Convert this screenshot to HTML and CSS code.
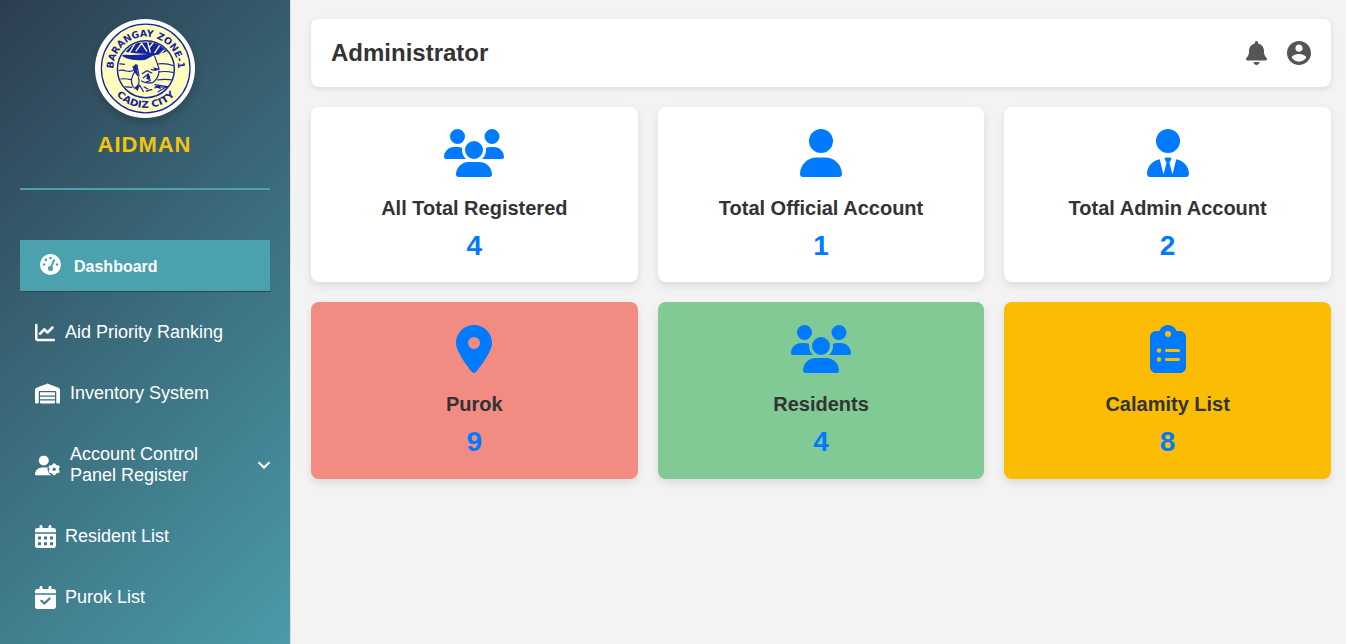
FILE: index.html
```html
<!DOCTYPE html>
<html lang="en">
<head>
<meta charset="utf-8">
<title>AIDMAN</title>
<link rel="stylesheet" href="styles.css">
</head>
<body>
<svg class="defs" width="0" height="0" aria-hidden="true">
  <symbol id="users" viewBox="0 0 640 512"><path d="M144 0a80 80 0 1 1 0 160A80 80 0 1 1 144 0zM512 0a80 80 0 1 1 0 160A80 80 0 1 1 512 0zM0 298.7C0 239.8 47.8 192 106.7 192h42.7c15.9 0 31 3.5 44.6 9.7c-1.3 7.2-1.9 14.7-1.9 22.3c0 38.2 16.8 72.5 43.3 96H21.3C9.6 320 0 310.4 0 298.7zM405.3 320c26.6-23.5 43.3-57.8 43.3-96c0-7.6-.7-15-1.9-22.3c13.6-6.3 28.7-9.7 44.6-9.7h42.7C592.2 192 640 239.8 640 298.7c0 11.8-9.6 21.3-21.3 21.3H405.3zM224 224a96 96 0 1 1 192 0 96 96 0 1 1 -192 0zM128 485.3C128 411.7 187.7 352 261.3 352H378.7C452.3 352 512 411.7 512 485.3c0 14.7-11.9 26.7-26.7 26.7H154.7c-14.7 0-26.7-11.9-26.7-26.7z"/></symbol>
</svg>
<aside class="sidebar">
  <div class="brand">
    <div class="logo">
      <svg viewBox="0 0 100 100" width="100" height="100">
        <defs>
          <path id="arc-top" d="M18.600 53.500A32.300 32.300 0 1 1 82.800 53.500"/>
          <path id="arc-bottom" d="M11.700 54.500A39.300 39.300 0 0 0 89.700 54.500"/>
          <clipPath id="inner"><circle cx="184" cy="178" r="83"/></clipPath>
        </defs>
        <circle cx="50.700" cy="49.500" r="44.300" fill="#fffcbe" stroke="#1525a0" stroke-width="1.300"/>
        <circle cx="50.900" cy="50.200" r="28.500" fill="none" stroke="#1525a0" stroke-width="1.500"/>
        <text class="seal-text"><textPath href="#arc-top" startOffset="50%" text-anchor="middle" textLength="101" lengthAdjust="spacingAndGlyphs">BARANGAY ZONE-1</textPath></text>
        <text class="seal-text"><textPath href="#arc-bottom" startOffset="50%" text-anchor="middle" textLength="66" lengthAdjust="spacingAndGlyphs">CADIZ CITY</textPath></text>
        <g transform="translate(-10 -9) scale(.33333)">
          <g clip-path="url(#inner)" fill="none" stroke="#1525a0" stroke-width="3.500">
            <path fill="#1525a0" stroke="none" d="M144 98L215 96L246 124L220 134L150 130L122 126Z"/>
            <path stroke="#fffcbe" stroke-width="4" d="M152 98L132 130M152 124L170 100L186 124M188 96L196 128M206 96L194 112M224 106L208 130M238 120L224 132"/>
            <path fill="#1525a0" stroke="none" d="M100 132Q140 140 232 127Q204 136 182 149Q150 154 124 145Z"/>
            <path d="M100 161L120 163M218 162Q242 158 268 168M98 182Q112 178 124 183Q138 186 148 180M220 186Q242 182 268 188M100 208Q118 204 138 209M216 210Q240 206 264 210M112 234Q124 228 142 233M208 234Q230 228 252 234"/>
            <path d="M152 163Q154 180 144 194Q132 220 150 236Q168 220 160 202M156 164L162 200M208 136Q216 158 222 176Q206 184 198 178M170 192L186 182L202 190M174 204L190 192L196 212L180 218M222 182Q222 206 202 218Q184 222 168 212M154 240L164 226L176 246M176 230L190 238M182 244L202 238M208 224L246 230L218 246"/>
            <path fill="#1525a0" stroke="none" d="M142 170L154 162L160 202L148 186ZM204 172L226 178L210 182ZM186 196L196 198L192 210L184 206ZM150 230L164 224L158 244ZM208 230L224 224L228 238Z"/>
          </g>
        </g>
      </svg>
    </div>
    <div class="brand-name">AIDMAN</div>
  </div>
  <nav class="menu">
    <a class="item active">
      <svg class="ic20" viewBox="0 0 512 512"><path fill-rule="evenodd" d="M0 256a256 256 0 1 1 512 0A256 256 0 1 1 0 256zM288 96a32 32 0 1 0-64 0 32 32 0 1 0 64 0zM256 416c35.300 0 64-28.700 64-64 0-17.400-6.900-33.100-18.100-44.600L366 161.700c5.300-12.100-.2-26.300-12.300-31.600s-26.300.2-31.600 12.300L257.900 288H256c-35.300 0-64 28.700-64 64s28.700 64 64 64zM176 144a32 32 0 1 0-64 0 32 32 0 1 0 64 0zM96 288a32 32 0 1 0 0-64 32 32 0 1 0 0 64zM448 256a32 32 0 1 0-64 0 32 32 0 1 0 64 0z"/></svg>
      <span>Dashboard</span>
    </a>
    <a class="item">
      <svg class="ic20" viewBox="0 0 512 512"><path d="M64 64c0-17.700-14.300-32-32-32S0 46.300 0 64V400c0 44.200 35.800 80 80 80H480c17.700 0 32-14.300 32-32s-14.300-32-32-32H80c-8.800 0-16-7.200-16-16V64zm406.600 86.600c12.500-12.500 12.500-32.800 0-45.300s-32.800-12.500-45.300 0L320 210.700l-57.400-57.400c-12.500-12.500-32.800-12.500-45.300 0l-112 112c-12.500 12.500-12.500 32.800 0 45.300s32.800 12.500 45.300 0L240 221.300l57.400 57.400c12.500 12.500 32.800 12.500 45.300 0l128-128z"/></svg>
      <span>Aid Priority Ranking</span>
    </a>
    <a class="item">
      <svg class="ic25" viewBox="0 0 640 512"><path d="M0 488V171.300c0-26.200 15.900-49.700 40.200-59.400L308.100 4.800c7.600-3.100 16.100-3.100 23.800 0L599.800 111.900c24.300 9.700 40.200 33.300 40.200 59.400V488c0 13.300-10.700 24-24 24H568c-13.300 0-24-10.700-24-24V224c0-17.700-14.300-32-32-32H128c-17.700 0-32 14.300-32 32V488c0 13.300-10.700 24-24 24H24c-13.300 0-24-10.700-24-24zm488 24H152c-13.300 0-24-10.700-24-24V432H512v56c0 13.300-10.700 24-24 24zM128 400V336H512v64H128zm0-96V224H512v80H128z"/></svg>
      <span>Inventory System</span>
    </a>
    <a class="item account">
      <svg class="ic25" viewBox="0 0 640 512">
        <mask id="cut"><path fill="#fff" d="M0 0H640V512H0z"/><circle cx="490" cy="352" r="168" fill="#000"/></mask>
        <g mask="url(#cut)"><circle cx="224" cy="128" r="128"/><path d="M178.300 304C79.800 304 0 383.800 0 482.300C0 498.700 13.300 512 29.700 512H430V304z"/></g>
        <circle cx="490" cy="352" r="84" fill="none" stroke="#fff" stroke-width="78"/>
        <g stroke="#fff" stroke-width="84" stroke-linecap="round"><path d="M490 240v18M490 446v18M393 296l16 9M571 399l16 9M393 408l16-9M571 305l16-9"/></g>
      </svg>
      <span>Account Control<br>Panel Register</span>
      <svg class="chevron" viewBox="0 0 14 8"><path d="M1.500 1.200L7 6.500L12.500 1.200"/></svg>
    </a>
    <a class="item">
      <svg class="cal" viewBox="0 0 448 512" preserveAspectRatio="none"><path fill-rule="evenodd" d="M128 0c17.700 0 32 14.300 32 32V64H288V32c0-17.700 14.300-32 32-32s32 14.300 32 32V64h48c26.500 0 48 21.500 48 48v48H0V112C0 85.500 21.500 64 48 64H96V32c0-17.700 14.300-32 32-32zM0 192H448V464c0 26.500-21.500 48-48 48H48c-26.500 0-48-21.500-48-48zM64 256v64h64v-64zM192 256v64h64v-64zM320 256v64h64v-64zM64 384v64h64v-64zM192 384v64h64v-64zM320 384v64h64v-64z"/></svg>
      <span>Resident List</span>
    </a>
    <a class="item">
      <svg class="cal" viewBox="0 0 448 512" preserveAspectRatio="none"><path fill-rule="evenodd" d="M128 0c17.700 0 32 14.300 32 32V64H288V32c0-17.700 14.300-32 32-32s32 14.300 32 32V64h48c26.500 0 48 21.500 48 48v48H0V112C0 85.500 21.500 64 48 64H96V32c0-17.700 14.300-32 32-32zM0 192H448V464c0 26.500-21.500 48-48 48H48c-26.500 0-48-21.500-48-48zM329 297c9.400-9.400 9.400-24.600 0-33.900s-24.600-9.400-33.900 0L200 358.100l-47-47c-9.400-9.400-24.600-9.400-33.900 0s-9.400 24.600 0 33.900l64 64c9.400 9.400 24.600 9.400 33.900 0z"/></svg>
      <span>Purok List</span>
    </a>
  </nav>
</aside>
<main class="content">
  <header class="topbar">
    <h1>Administrator</h1>
    <div class="actions">
      <svg class="bell" viewBox="0 0 448 512"><path d="M224 0c-17.700 0-32 14.300-32 32V51.200C119 66 64 130.600 64 208v18.800c0 47-17.300 92.400-48.500 127.600l-7.400 8.300c-8.400 9.400-10.400 22.900-5.300 34.400S19.400 416 32 416H416c12.600 0 24-7.400 29.200-18.900s3.100-25-5.300-34.400l-7.400-8.300C401.300 319.200 384 273.900 384 226.800V208c0-77.400-55-142-128-156.800V32c0-17.700-14.300-32-32-32zm45.300 493.300c12-12 18.700-28.300 18.700-45.300H160c0 17 6.700 33.300 18.700 45.300s28.300 18.700 45.300 18.700s33.300-6.700 45.300-18.700z"/></svg>
      <svg class="profile" viewBox="2 2 20 20"><path d="M12 2C6.480 2 2 6.480 2 12s4.480 10 10 10 10-4.480 10-10S17.520 2 12 2zm0 3c1.660 0 3 1.340 3 3s-1.340 3-3 3-3-1.340-3-3 1.340-3 3-3zm0 14.200c-2.500 0-4.710-1.280-6-3.220.03-1.990 4-3.080 6-3.080 1.990 0 5.970 1.090 6 3.080-1.290 1.940-3.500 3.220-6 3.220z"/></svg>
    </div>
  </header>
  <section class="cards">
    <article class="card">
      <svg class="w60"><use href="#users"/></svg>
      <h2>All Total Registered</h2><p>4</p>
    </article>
    <article class="card">
      <svg class="w42" viewBox="0 0 448 512"><path d="M224 256A128 128 0 1 0 224 0a128 128 0 1 0 0 256zm-45.700 48C79.800 304 0 383.800 0 482.300C0 498.700 13.300 512 29.700 512H418.300c16.400 0 29.700-13.300 29.700-29.700C448 383.800 368.200 304 269.700 304H178.300z"/></svg>
      <h2>Total Official Account</h2><p>1</p>
    </article>
    <article class="card">
      <svg class="w42" viewBox="0 0 448 512"><path d="M224 256A128 128 0 1 1 224 0a128 128 0 1 1 0 256zM209.100 359.200l-18.600-31c-6.400-10.700 1.300-24.200 13.700-24.200H243.700c12.400 0 20.100 13.600 13.700 24.200l-18.600 31 33.400 123.900 39.500-161.200c77.200 12 136.300 78.800 136.300 159.400c0 17-13.800 30.700-30.700 30.700H30.700C13.800 512 0 498.200 0 481.300c0-80.600 59.100-147.400 136.300-159.400l39.500 161.200 33.400-123.900z"/></svg>
      <h2>Total Admin Account</h2><p>2</p>
    </article>
    <article class="card lower red">
      <svg class="w36" viewBox="0 0 384 512"><path fill-rule="evenodd" d="M215.700 499.200C267 435 384 279.400 384 192C384 86 298 0 192 0S0 86 0 192c0 87.400 117 243 168.300 307.200c12.300 15.300 35.100 15.300 47.400 0zM192 128a64 64 0 1 1 0 128 64 64 0 1 1 0-128z"/></svg>
      <h2>Purok</h2><p>9</p>
    </article>
    <article class="card lower green">
      <svg class="w60"><use href="#users"/></svg>
      <h2>Residents</h2><p>4</p>
    </article>
    <article class="card lower yellow">
      <svg class="w36" viewBox="0 0 384 512"><path fill-rule="evenodd" d="M192 0c-41.800 0-77.400 26.700-90.500 64H64C28.700 64 0 92.700 0 128V448c0 35.300 28.700 64 64 64H320c35.300 0 64-28.700 64-64V128c0-35.300-28.700-64-64-64H282.500C269.400 26.700 233.800 0 192 0zm0 64a32 32 0 1 1 0 64 32 32 0 1 1 0-64zM72 272a24 24 0 1 1 48 0 24 24 0 1 1-48 0zm104-16H304c8.800 0 16 7.200 16 16s-7.200 16-16 16H176c-8.800 0-16-7.200-16-16s7.200-16 16-16zM72 368a24 24 0 1 1 48 0 24 24 0 1 1-48 0zm88 0c0-8.800 7.200-16 16-16H304c8.800 0 16 7.200 16 16s-7.200 16-16 16H176c-8.800 0-16-7.200-16-16z"/></svg>
      <h2>Calamity List</h2><p>8</p>
    </article>
  </section>
</main>
</body>
</html>
```
FILE: styles.css
```css
* { box-sizing: border-box; }
body {
  margin: 0;
  height: 644px;
  display: flex;
  overflow: hidden;
  background: #f3f3f3;
  font-family: "Liberation Sans", Arial, sans-serif;
}
.defs { position: absolute; }
svg { display: block; flex: none; }
h1, h2, p { margin: 0; }

.sidebar {
  flex: none;
  width: 291px;
  height: 644px;
  padding: 19px 20px 0;
  border-right: 1px solid #ddd;
  background: linear-gradient(135deg, #2c3e50, #4ca1af) 0 0 / 100% 704px no-repeat;
  color: #fff;
}
.brand {
  height: 171px;
  display: flex;
  flex-direction: column;
  align-items: center;
  border-bottom: 2px solid #4ca1af;
}
.logo {
  width: 100px;
  height: 99px;
  border-radius: 50%;
  background: #fff;
  overflow: hidden;
  box-shadow: 0 4px 8px rgba(0, 0, 0, .2);
}
.seal-text { font: bold 9.5px "DejaVu Sans", sans-serif; fill: #1525a0; }
.brand-name {
  margin-top: 14px;
  font-size: 22px;
  line-height: 26px;
  font-weight: bold;
  letter-spacing: 1px;
  color: #f1c40f;
  padding-right: 1px;
}
.menu { margin-top: 50px; }
.item {
  display: flex;
  align-items: center;
  height: 61px;
  padding-left: 15px;
  gap: 10px;
  font-size: 18px;
  line-height: 21px;
  fill: #fff;
}
.item.active {
  height: 52px;
  margin-bottom: 10px;
  padding: 0 20px 1px;
  gap: 13px;
  background: #4ca1af;
  border-bottom: 1px solid #2c4a5a;
  font-size: 16px;
  font-weight: bold;
}
.item.active svg { position: relative; top: -1px; width: 21px; }
.item.active span { padding-top: 2px; }
.item.account { height: 82px; }
.ic20 { width: 20px; height: 21px; }
.ic25 { width: 25px; height: 21px; }
.cal { width: 21px; height: 23px; margin-right: -1px; }
.chevron {
  width: 14px;
  height: 8px;
  margin-left: auto;
  margin-right: -1px;
  fill: none;
  stroke: #fff;
  stroke-width: 2;
}

.content { flex: 1; padding: 19px 15px 0 20px; }
.topbar {
  display: flex;
  align-items: center;
  justify-content: space-between;
  height: 68px;
  padding: 0 20px;
  border-radius: 8px;
  background: #fff;
  box-shadow: 0 2px 6px rgba(0, 0, 0, .1);
}
.topbar h1 { font-size: 24px; color: #333; }
.actions { display: flex; align-items: center; gap: 20px; fill: #555; }
.bell { width: 21px; height: 24px; }
.profile { width: 24px; height: 24px; }

.cards {
  display: grid;
  grid-template-columns: repeat(3, 1fr);
  grid-template-rows: 175px 177px;
  gap: 20px;
  margin-top: 20px;
}
.card {
  display: flex;
  flex-direction: column;
  align-items: center;
  padding-top: 22px;
  border-radius: 8px;
  background: #fff;
  box-shadow: 0 4px 8px rgba(0, 0, 0, .1);
  fill: #007bff;
}
.card.lower { padding-top: 23px; }
.card svg { height: 48px; }
.card h2 {
  margin-top: 19px;
  font-size: 20px;
  line-height: 24px;
  color: #333;
}
.card p {
  margin-top: 10px;
  font-size: 28px;
  line-height: 32px;
  font-weight: bold;
  color: #007bff;
}
.w60 { width: 60px; }
.w42 { width: 42px; }
.w36 { width: 36px; }
.red { background: #f28b82; }
.green { background: #81c995; }
.yellow { background: #fbbc04; }
```
